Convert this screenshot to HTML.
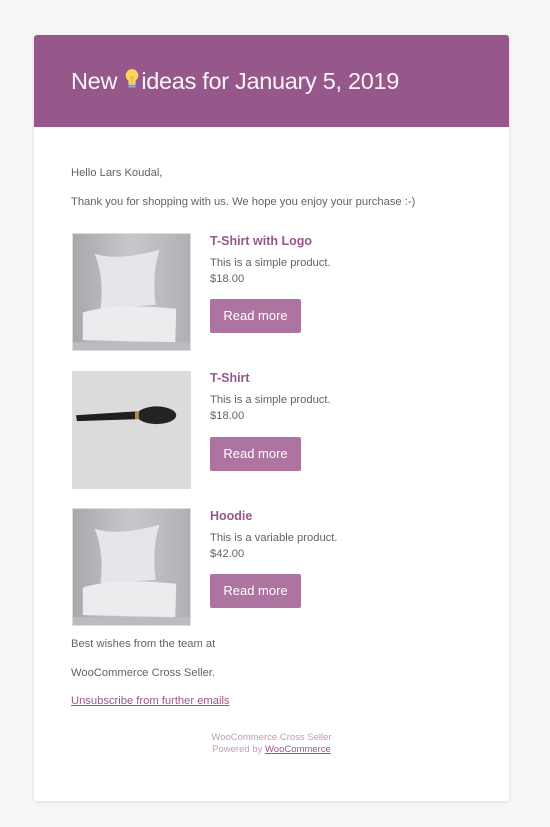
<!DOCTYPE html>
<html><head><meta charset="utf-8"><style>
*{margin:0;padding:0;box-sizing:border-box}
body{width:550px;height:827px;background:#f7f7f7;font-family:"Liberation Sans",Arial,sans-serif;position:relative;overflow:hidden}
.card{position:absolute;left:34px;top:35px;width:475px;height:766px;background:#fff;border-radius:3px;box-shadow:0 1px 4px rgba(0,0,0,.12)}
.hdr{position:absolute;left:34px;top:35px;width:475px;height:92px;background:#96588a;border-radius:3px 3px 0 0}
.hdr h1{position:absolute;left:37px;top:32px;font-size:23.5px;font-weight:normal;color:#fbf4fa;white-space:nowrap;letter-spacing:-.3px}
.t{position:absolute;left:71px;font-size:11.2px;color:#636363;white-space:nowrap}
.img{position:absolute;left:72px;width:119px;height:118px;border:1px solid #ddd}
.pt{position:absolute;left:210px;font-size:12.5px;font-weight:bold;color:#96588a}
.pd{position:absolute;left:210px;font-size:11.2px;color:#636363;line-height:15.5px}
.btn{position:absolute;left:210px;width:91px;height:34px;background:#ad74a2;border-radius:2px;color:#fff;font-size:13px;text-align:center;line-height:34px}
.ft{position:absolute;left:34px;width:475px;text-align:center;font-size:9.5px;color:#c09bb9}
</style></head><body>
<div class="card"></div>
<div class="hdr"><h1>New <svg width="18" height="24" viewBox="0 0 20 24" style="vertical-align:-2px"><circle cx="10" cy="8" r="7" fill="#fcd45e"/><rect x="6" y="13" width="8" height="4" fill="#fcd45e"/><rect x="6" y="17" width="8" height="2" fill="#b9c4cf"/><rect x="6" y="19.5" width="8" height="2" fill="#99a8b5"/><path d="M8 9l2 3 2-3M10 12v4" stroke="#e8a93a" fill="none"/></svg>ideas for January 5, 2019</h1></div>
<div class="t" style="top:167px">Hello Lars Koudal,</div>
<div class="t" style="top:196px">Thank you for shopping with us. We hope you enjoy your purchase :-)</div>

<svg class="img" style="top:233px" viewBox="0 0 119 118"><defs><linearGradient id="g" x1="0" x2="1"><stop offset="0" stop-color="#a9a7ab"/><stop offset=".5" stop-color="#c9c7cb"/><stop offset="1" stop-color="#b1afb3"/></linearGradient></defs><rect width="119" height="118" fill="url(#g)"/><path d="M22 20 Q45 28 88 16 Q80 40 84 72 L28 76 Q32 45 22 20Z" fill="#e6e6ea"/><path d="M10 80 Q40 70 105 76 L104 110 L10 108Z" fill="#ececef"/><rect y="110" width="119" height="8" fill="#bdbbbf"/></svg>
<div class="pt" style="top:234px">T-Shirt with Logo</div>
<div class="pd" style="top:256px">This is a simple product.<br>$18.00</div>
<div class="btn" style="top:299px">Read more</div>

<svg class="img" style="top:371px" viewBox="0 0 119 118"><rect width="119" height="118" fill="#dcdadd"/><path d="M3 44 L65 40 L66 48 L4 50Z" fill="#1e1e1e"/><ellipse cx="85" cy="44" rx="20" ry="9" fill="#232323"/><rect x="63" y="40" width="4" height="8" fill="#b08a4a"/></svg>
<div class="pt" style="top:371px">T-Shirt</div>
<div class="pd" style="top:393px">This is a simple product.<br>$18.00</div>
<div class="btn" style="top:437px">Read more</div>

<svg class="img" style="top:508px" viewBox="0 0 119 118"><rect width="119" height="118" fill="url(#g)"/><path d="M22 20 Q45 28 88 16 Q80 40 84 72 L28 76 Q32 45 22 20Z" fill="#e6e6ea"/><path d="M10 80 Q40 70 105 76 L104 110 L10 108Z" fill="#ececef"/><rect y="110" width="119" height="8" fill="#bdbbbf"/></svg>
<div class="pt" style="top:509px">Hoodie</div>
<div class="pd" style="top:531px">This is a variable product.<br>$42.00</div>
<div class="btn" style="top:574px">Read more</div>

<div class="t" style="top:638px">Best wishes from the team at</div>
<div class="t" style="top:667px">WooCommerce Cross Seller.</div>
<div class="t" style="top:695px;color:#96588a;text-decoration:underline">Unsubscribe from further emails</div>
<div class="ft" style="top:732px">WooCommerce Cross Seller</div>
<div class="ft" style="top:744px">Powered by <span style="color:#96588a;text-decoration:underline">WooCommerce</span></div>
</body></html>
